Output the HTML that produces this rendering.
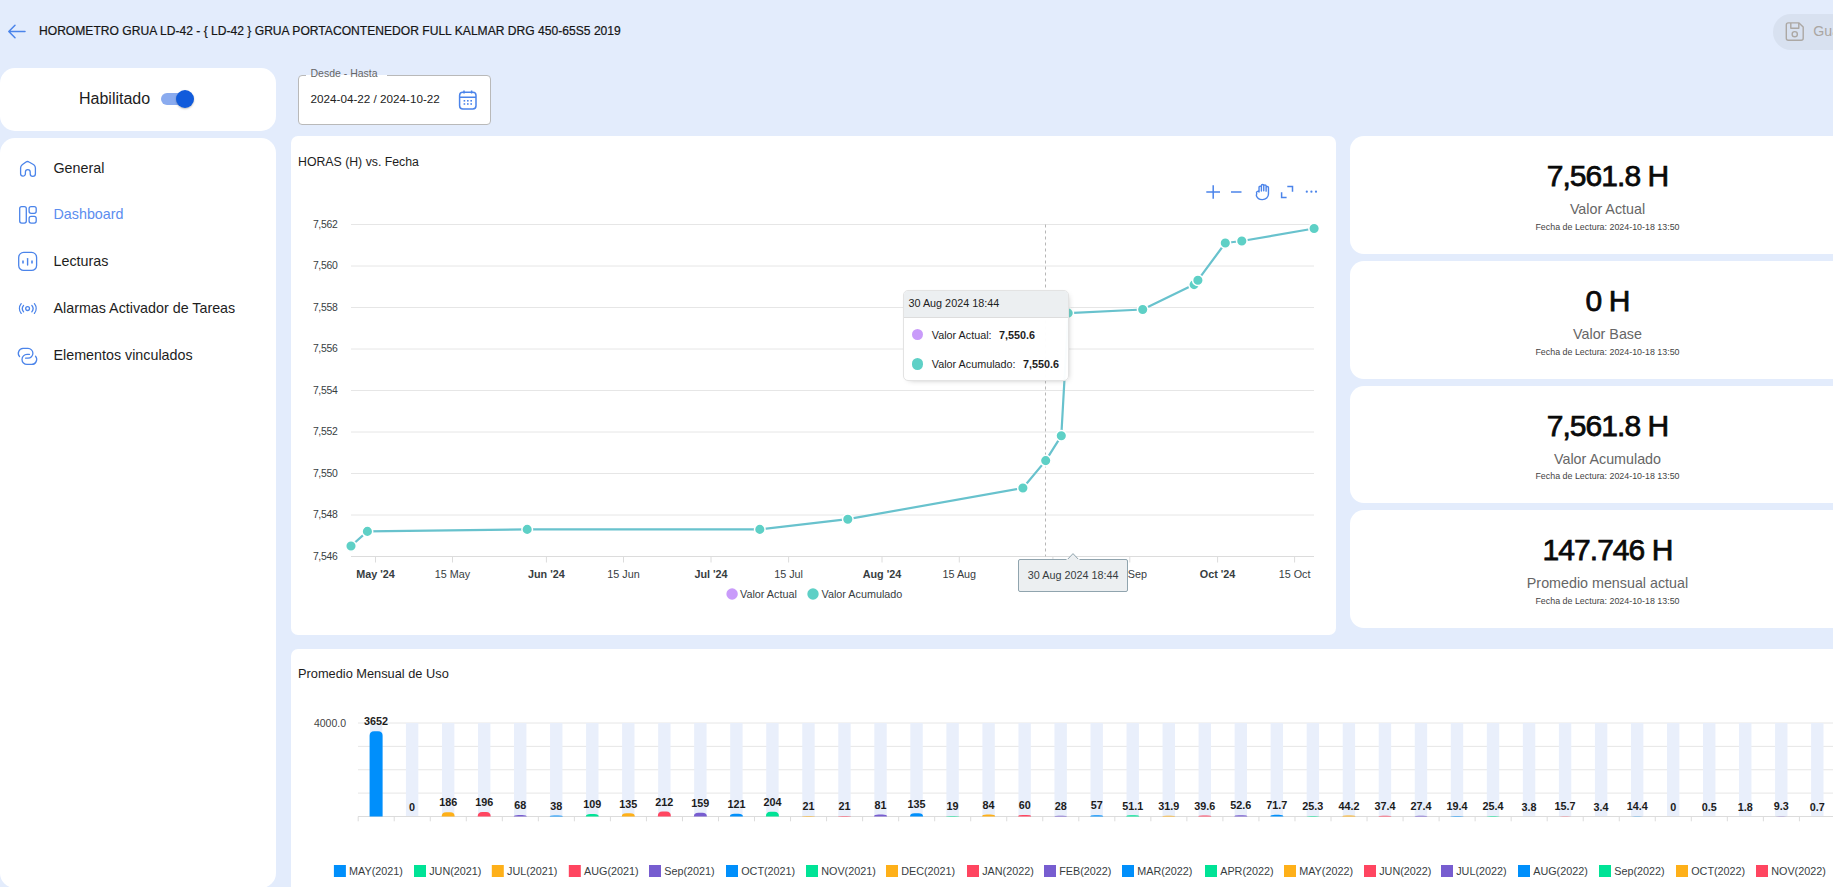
<!DOCTYPE html>
<html><head><meta charset="utf-8"><title>Horometro</title>
<style>
html,body{margin:0;padding:0;}
body{width:1833px;height:887px;overflow:hidden;background:#e3ecfc;font-family:"Liberation Sans", sans-serif;position:relative;color:#1d1d1d;}
.a{position:absolute;}
.card{position:absolute;background:#fff;}
.t{position:absolute;white-space:nowrap;line-height:1;}
svg text{font-family:"Liberation Sans", sans-serif;}
</style></head><body>
<!-- header -->
<svg class="a" style="left:0;top:0" width="1833" height="60">
<path d="M9,31.5 H25 M15,25.3 L8.8,31.5 L15,37.7" stroke="#4b84ea" stroke-width="1.5" fill="none" stroke-linecap="round" stroke-linejoin="round"/>
</svg>
<div class="t" style="left:39px;top:25px;font-size:12.1px;color:#151515;-webkit-text-stroke:0.2px #151515">HOROMETRO GRUA LD-42 - { LD-42 } GRUA PORTACONTENEDOR FULL KALMAR DRG 450-65S5 2019</div>
<div class="a" style="left:1773px;top:14px;width:130px;height:36px;border-radius:18px;background:#d8e1f0"></div>
<svg class="a" style="left:0;top:0" width="1833" height="60">
<g fill="none" stroke="#aca8a4" stroke-width="1.4" stroke-linejoin="round">
<path d="M1788.3,22.9 H1799 L1803.2,27.1 V38.3 A2,2 0 0 1 1801.2,40.3 H1788.3 A2,2 0 0 1 1786.3,38.3 V24.9 A2,2 0 0 1 1788.3,22.9 Z"/>
<path d="M1790.8,22.9 V28.2 H1798.8 V22.9"/>
<circle cx="1794.75" cy="34.2" r="2.6"/>
</g></svg>
<div class="t" style="left:1813.3px;top:23.8px;font-size:14.2px;color:#aaa6a2">Guardar</div>

<!-- sidebar -->
<div class="card" style="left:0;top:68px;width:276px;height:63px;border-radius:15px"></div>
<div class="t" style="left:79px;top:90.5px;font-size:16px;color:#1d1d1d">Habilitado</div>
<div class="a" style="left:161px;top:93px;width:30px;height:12px;border-radius:6px;background:#8aabef"></div>
<div class="a" style="left:176px;top:90px;width:18px;height:18px;border-radius:9px;background:#115bdb;box-shadow:0 1px 2px rgba(0,0,0,.25)"></div>

<div class="card" style="left:0;top:138px;width:276px;height:750px;border-radius:15px"></div>
<div class="t" style="left:53.5px;top:161.16px;font-size:14.3px;color:#1d1d1d">General</div>
<div class="t" style="left:53.5px;top:206.76px;font-size:14.3px;color:#5b8def">Dashboard</div>
<div class="t" style="left:53.5px;top:254.36px;font-size:14.3px;color:#1d1d1d">Lecturas</div>
<div class="t" style="left:53.5px;top:301.16px;font-size:14.3px;color:#1d1d1d">Alarmas Activador de Tareas</div>
<div class="t" style="left:53.5px;top:348.36px;font-size:14.3px;color:#1d1d1d">Elementos vinculados</div>
<svg class="a" style="left:0;top:140px" width="60" height="240" viewBox="0 140 60 240" fill="none" stroke="#4b84ea" stroke-width="1.3" stroke-linejoin="round" stroke-linecap="round">
<path d="M20.6,168 Q20.6,166 22.2,164.8 L26,162 Q27.5,161 29,162 L33.8,164.8 Q35.4,166 35.4,168 V173.7 a2.55,2.55 0 0 1 -5.2,0 V172 a2.4,2.4 0 0 0 -4.8,0 V173.7 a2.4,2.4 0 0 1 -4.8,0 Z"/>
<rect x="19.7" y="206.6" width="6.6" height="16.5" rx="2"/>
<rect x="29.1" y="206.6" width="7.1" height="6.7" rx="2"/>
<rect x="29.1" y="216.4" width="7.1" height="6.7" rx="2"/>
<rect x="18.7" y="252.4" width="17.9" height="18" rx="5"/>
<path d="M27.6,258.6 V265.1" stroke-width="1.4"/>
<path d="M23,260.4 V263.4 M32,260.4 V263.4" stroke-width="1.6" stroke-linecap="butt"/>
<circle cx="27.6" cy="308.6" r="1.9"/>
<path d="M23.6,305.4 A5,5 0 0 0 23.6,311.8 M31.8,305.4 A5,5 0 0 1 31.8,311.8 M21.2,303.7 A7.6,7.6 0 0 0 21.2,313.4 M34.4,303.7 A7.6,7.6 0 0 1 34.4,313.4"/>
<path d="M19.6,356.6 A4.9,4.9 0 0 1 23,348.4 H28 A4.9,4.9 0 0 1 28,358.2 H25.6"/>
<path d="M29.4,354.4 H27 A5,5 0 0 0 27,364.4 H31.5 A5,5 0 0 0 35.5,356.2"/>
</svg>

<!-- date field -->
<div class="a" style="left:298px;top:75px;width:191px;height:48px;border:1px solid #b9b9b9;border-radius:4px;background:#fff"></div>
<div class="a" style="left:306px;top:70px;width:81px;height:5.5px;background:#e3ecfc"></div>
<div class="a" style="left:306px;top:75px;width:81px;height:2px;background:#fff"></div>
<div class="t" style="left:310.5px;top:68px;font-size:10.5px;color:#666">Desde - Hasta</div>
<div class="t" style="left:310.5px;top:93px;font-size:11.7px;color:#222">2024-04-22 / 2024-10-22</div>
<svg class="a" style="left:457px;top:89px" width="22" height="22" viewBox="0 0 22 22">
<rect x="2.6" y="3.3" width="16.4" height="16.6" rx="3.2" fill="none" stroke="#4b84ea" stroke-width="1.5"/>
<path d="M2.6,8.2 H19 M7,1.5 V4.5 M14.6,1.5 V4.5" stroke="#4b84ea" stroke-width="1.5" fill="none"/>
<g fill="#4b84ea"><rect x="6.6" y="11" width="1.6" height="1.6"/><rect x="10" y="11" width="1.6" height="1.6"/><rect x="13.4" y="11" width="1.6" height="1.6"/>
<rect x="6.6" y="14.2" width="1.6" height="1.6"/><rect x="10" y="14.2" width="1.6" height="1.6"/><rect x="13.4" y="14.2" width="1.6" height="1.6"/></g>
</svg>

<!-- line chart card -->
<div class="card" style="left:291px;top:136px;width:1045px;height:499px;border-radius:7px"></div>
<div class="t" style="left:298px;top:155.9px;font-size:12.3px;color:#1d1d1d">HORAS (H) vs. Fecha</div>
<svg class="a" style="left:0;top:0" width="1833" height="887">
<line x1="351" y1="224.5" x2="1314" y2="224.5" stroke="#e6e6e6" stroke-width="1"/>
<text x="337.4" y="227.5" text-anchor="end" font-size="10.4" letter-spacing="-0.3" fill="#373d3f">7,562</text>
<line x1="351" y1="266.0" x2="1314" y2="266.0" stroke="#e6e6e6" stroke-width="1"/>
<text x="337.4" y="269.0" text-anchor="end" font-size="10.4" letter-spacing="-0.3" fill="#373d3f">7,560</text>
<line x1="351" y1="307.5" x2="1314" y2="307.5" stroke="#e6e6e6" stroke-width="1"/>
<text x="337.4" y="310.5" text-anchor="end" font-size="10.4" letter-spacing="-0.3" fill="#373d3f">7,558</text>
<line x1="351" y1="349.0" x2="1314" y2="349.0" stroke="#e6e6e6" stroke-width="1"/>
<text x="337.4" y="352.0" text-anchor="end" font-size="10.4" letter-spacing="-0.3" fill="#373d3f">7,556</text>
<line x1="351" y1="390.5" x2="1314" y2="390.5" stroke="#e6e6e6" stroke-width="1"/>
<text x="337.4" y="393.5" text-anchor="end" font-size="10.4" letter-spacing="-0.3" fill="#373d3f">7,554</text>
<line x1="351" y1="432.0" x2="1314" y2="432.0" stroke="#e6e6e6" stroke-width="1"/>
<text x="337.4" y="435.0" text-anchor="end" font-size="10.4" letter-spacing="-0.3" fill="#373d3f">7,552</text>
<line x1="351" y1="473.5" x2="1314" y2="473.5" stroke="#e6e6e6" stroke-width="1"/>
<text x="337.4" y="476.5" text-anchor="end" font-size="10.4" letter-spacing="-0.3" fill="#373d3f">7,550</text>
<line x1="351" y1="515.0" x2="1314" y2="515.0" stroke="#e6e6e6" stroke-width="1"/>
<text x="337.4" y="518.0" text-anchor="end" font-size="10.4" letter-spacing="-0.3" fill="#373d3f">7,548</text>
<line x1="351" y1="556.5" x2="1314" y2="556.5" stroke="#dcdcdc" stroke-width="1"/>
<text x="337.4" y="559.5" text-anchor="end" font-size="10.4" letter-spacing="-0.3" fill="#373d3f">7,546</text>
<line x1="375.5" y1="556.5" x2="375.5" y2="562.5" stroke="#dcdcdc" stroke-width="1"/>
<text x="375.5" y="578" text-anchor="middle" font-size="10.8" fill="#373d3f" font-weight="700">May '24</text>
<line x1="452.5" y1="556.5" x2="452.5" y2="562.5" stroke="#dcdcdc" stroke-width="1"/>
<text x="452.5" y="578" text-anchor="middle" font-size="10.8" fill="#373d3f" font-weight="400">15 May</text>
<line x1="546.4" y1="556.5" x2="546.4" y2="562.5" stroke="#dcdcdc" stroke-width="1"/>
<text x="546.4" y="578" text-anchor="middle" font-size="10.8" fill="#373d3f" font-weight="700">Jun '24</text>
<line x1="623.5" y1="556.5" x2="623.5" y2="562.5" stroke="#dcdcdc" stroke-width="1"/>
<text x="623.5" y="578" text-anchor="middle" font-size="10.8" fill="#373d3f" font-weight="400">15 Jun</text>
<line x1="711" y1="556.5" x2="711" y2="562.5" stroke="#dcdcdc" stroke-width="1"/>
<text x="711" y="578" text-anchor="middle" font-size="10.8" fill="#373d3f" font-weight="700">Jul '24</text>
<line x1="788.6" y1="556.5" x2="788.6" y2="562.5" stroke="#dcdcdc" stroke-width="1"/>
<text x="788.6" y="578" text-anchor="middle" font-size="10.8" fill="#373d3f" font-weight="400">15 Jul</text>
<line x1="882" y1="556.5" x2="882" y2="562.5" stroke="#dcdcdc" stroke-width="1"/>
<text x="882" y="578" text-anchor="middle" font-size="10.8" fill="#373d3f" font-weight="700">Aug '24</text>
<line x1="959.3" y1="556.5" x2="959.3" y2="562.5" stroke="#dcdcdc" stroke-width="1"/>
<text x="959.3" y="578" text-anchor="middle" font-size="10.8" fill="#373d3f" font-weight="400">15 Aug</text>
<line x1="1052.9" y1="556.5" x2="1052.9" y2="562.5" stroke="#dcdcdc" stroke-width="1"/>
<text x="1052.9" y="578" text-anchor="middle" font-size="10.8" fill="#373d3f" font-weight="700">Sep '24</text>
<line x1="1129.8" y1="556.5" x2="1129.8" y2="562.5" stroke="#dcdcdc" stroke-width="1"/>
<text x="1129.8" y="578" text-anchor="middle" font-size="10.8" fill="#373d3f" font-weight="400">15 Sep</text>
<line x1="1217.6" y1="556.5" x2="1217.6" y2="562.5" stroke="#dcdcdc" stroke-width="1"/>
<text x="1217.6" y="578" text-anchor="middle" font-size="10.8" fill="#373d3f" font-weight="700">Oct '24</text>
<line x1="1294.6" y1="556.5" x2="1294.6" y2="562.5" stroke="#dcdcdc" stroke-width="1"/>
<text x="1294.6" y="578" text-anchor="middle" font-size="10.8" fill="#373d3f" font-weight="400">15 Oct</text>
<line x1="1045.5" y1="224.5" x2="1045.5" y2="556.5" stroke="#b6b6b6" stroke-width="1" stroke-dasharray="3 3"/>
<path d="M351,546 L367.4,531.4 L527.2,529.4 L759.8,529.4 L847.8,519.2 L1022.9,488 L1045.7,460.6 L1061.3,435.8 L1068.2,313.1 L1142.7,309.5 L1194.1,284.6 L1197.9,280.2 L1225.3,243 L1241.8,241 L1314.1,228.5" fill="none" stroke="#68c2cd" stroke-width="2.2" stroke-linejoin="round"/>
<circle cx="351" cy="546" r="5.3" fill="#5ed0c6" stroke="#fff" stroke-width="1.5"/>
<circle cx="367.4" cy="531.4" r="5.3" fill="#5ed0c6" stroke="#fff" stroke-width="1.5"/>
<circle cx="527.2" cy="529.4" r="5.3" fill="#5ed0c6" stroke="#fff" stroke-width="1.5"/>
<circle cx="759.8" cy="529.4" r="5.3" fill="#5ed0c6" stroke="#fff" stroke-width="1.5"/>
<circle cx="847.8" cy="519.2" r="5.3" fill="#5ed0c6" stroke="#fff" stroke-width="1.5"/>
<circle cx="1022.9" cy="488" r="5.3" fill="#5ed0c6" stroke="#fff" stroke-width="1.5"/>
<circle cx="1045.7" cy="460.6" r="5.3" fill="#5ed0c6" stroke="#fff" stroke-width="1.5"/>
<circle cx="1061.3" cy="435.8" r="5.3" fill="#5ed0c6" stroke="#fff" stroke-width="1.5"/>
<circle cx="1068.2" cy="313.1" r="5.3" fill="#5ed0c6" stroke="#fff" stroke-width="1.5"/>
<circle cx="1142.7" cy="309.5" r="5.3" fill="#5ed0c6" stroke="#fff" stroke-width="1.5"/>
<circle cx="1194.1" cy="284.6" r="5.3" fill="#5ed0c6" stroke="#fff" stroke-width="1.5"/>
<circle cx="1197.9" cy="280.2" r="5.3" fill="#5ed0c6" stroke="#fff" stroke-width="1.5"/>
<circle cx="1225.3" cy="243" r="5.3" fill="#5ed0c6" stroke="#fff" stroke-width="1.5"/>
<circle cx="1241.8" cy="241" r="5.3" fill="#5ed0c6" stroke="#fff" stroke-width="1.5"/>
<circle cx="1314.1" cy="228.5" r="5.3" fill="#5ed0c6" stroke="#fff" stroke-width="1.5"/>
<g stroke="#4b84ea" stroke-width="1.5" fill="none" stroke-linecap="butt"><path d="M1206.3,192 H1220 M1213.2,185.2 V198.8"/><path d="M1231,192 H1241.5"/><path d="M1287.3,186.6 H1292.5 V191.8 M1281.6,192.2 V197.4 H1286.6" stroke-width="1.5"/></g>
<g transform="translate(1255.3,184) scale(1.07,1)" stroke="#4b84ea" stroke-width="1.3" fill="none" stroke-linecap="round" stroke-linejoin="round"><path d="M3.5,8 V3.2 a1.1,1.1 0 0 1 2.2,0 V7 M5.7,6.8 V1.6 a1.1,1.1 0 0 1 2.2,0 V6.8 M7.9,6.8 V2 a1.1,1.1 0 0 1 2.2,0 V7.2 M10.1,7.2 V3.6 a1.1,1.1 0 0 1 2.2,0 V10 a5.6,5.6 0 0 1 -5.6,5.6 h-0.4 a5.6,5.6 0 0 1 -5.3,-3.8 L1.3,9.2 a1.1,1.1 0 0 1 2.2,-1.2"/></g>
<g fill="#4b84ea"><circle cx="1306.8" cy="191.7" r="1.1"/><circle cx="1311.4" cy="191.7" r="1.1"/><circle cx="1316" cy="191.7" r="1.1"/></g>
<circle cx="732.1" cy="594" r="5.7" fill="#c99bfa"/>
<text x="740" y="597.8" font-size="10.8" fill="#373d3f">Valor Actual</text>
<circle cx="813" cy="594" r="5.7" fill="#5ed0c6"/>
<text x="821.5" y="597.8" font-size="10.8" fill="#373d3f">Valor Acumulado</text>
</svg>
<div class="a" style="left:903px;top:290px;width:164px;height:89px;border:1px solid #e3e3e3;border-radius:5px;background:rgba(255,255,255,0.97);box-shadow:2px 2px 6px -4px #999;overflow:hidden">
<div class="a" style="left:0;top:0;width:164px;height:25.5px;background:#eceff1;border-bottom:1px solid #ddd"></div>
</div>
<div class="t" style="left:908.5px;top:297.8px;font-size:10.8px;color:#1d1d1d">30 Aug 2024 18:44</div>
<div class="a" style="left:911.8px;top:328.8px;width:11.4px;height:11.4px;border-radius:6px;background:#c99bfa"></div>
<div class="t" style="left:931.8px;top:329.9px;font-size:10.8px;color:#1d1d1d">Valor Actual:</div>
<div class="t" style="left:999px;top:329.9px;font-size:10.8px;font-weight:700;color:#1d1d1d">7,550.6</div>
<div class="a" style="left:911.8px;top:358.3px;width:11.4px;height:11.4px;border-radius:6px;background:#5ed0c6"></div>
<div class="t" style="left:931.8px;top:359.1px;font-size:10.8px;color:#1d1d1d">Valor Acumulado:</div>
<div class="t" style="left:1023px;top:359.1px;font-size:10.8px;font-weight:700;color:#1d1d1d">7,550.6</div>
<!-- x tooltip -->
<div class="a" style="left:1018px;top:558.5px;width:108px;height:31.5px;border:1px solid #90a4ae;border-radius:2px;background:#eceff1"></div>
<svg class="a" style="left:1063px;top:551px" width="20" height="10" viewBox="0 0 20 10"><path d="M4.6,8.3 L10,2.6 L15.4,8.3" fill="#eceff1" stroke="#90a4ae" stroke-width="1"/><rect x="3.5" y="8" width="13" height="3" fill="#eceff1"/></svg>
<div class="t" style="left:1027.8px;top:570px;font-size:10.8px;color:#373d3f">30 Aug 2024 18:44</div>


<!-- stat cards -->
<div class="card" style="left:1350px;top:136px;width:520px;height:117.6px;border-radius:14px"></div>
<div class="t" style="left:1307.5px;width:600px;text-align:center;top:161.20px;font-size:30px;letter-spacing:-0.95px;font-weight:400;-webkit-text-stroke:0.75px #0a0a0a;color:#0a0a0a">7,561.8 H</div>
<div class="t" style="left:1307.5px;width:600px;text-align:center;top:202.06px;font-size:14.3px;color:#666">Valor Actual</div>
<div class="t" style="left:1307.5px;width:600px;text-align:center;top:222.95px;font-size:8.9px;color:#444">Fecha de Lectura: 2024-10-18 13:50</div>
<div class="card" style="left:1350px;top:261px;width:520px;height:117.6px;border-radius:14px"></div>
<div class="t" style="left:1307.5px;width:600px;text-align:center;top:286.21px;font-size:30px;letter-spacing:-0.95px;font-weight:400;-webkit-text-stroke:0.75px #0a0a0a;color:#0a0a0a">0 H</div>
<div class="t" style="left:1307.5px;width:600px;text-align:center;top:327.06px;font-size:14.3px;color:#666">Valor Base</div>
<div class="t" style="left:1307.5px;width:600px;text-align:center;top:347.95px;font-size:8.9px;color:#444">Fecha de Lectura: 2024-10-18 13:50</div>
<div class="card" style="left:1350px;top:385.5px;width:520px;height:117.6px;border-radius:14px"></div>
<div class="t" style="left:1307.5px;width:600px;text-align:center;top:410.71px;font-size:30px;letter-spacing:-0.95px;font-weight:400;-webkit-text-stroke:0.75px #0a0a0a;color:#0a0a0a">7,561.8 H</div>
<div class="t" style="left:1307.5px;width:600px;text-align:center;top:451.56px;font-size:14.3px;color:#666">Valor Acumulado</div>
<div class="t" style="left:1307.5px;width:600px;text-align:center;top:472.45px;font-size:8.9px;color:#444">Fecha de Lectura: 2024-10-18 13:50</div>
<div class="card" style="left:1350px;top:510.2px;width:520px;height:117.6px;border-radius:14px"></div>
<div class="t" style="left:1307.5px;width:600px;text-align:center;top:535.40px;font-size:30px;letter-spacing:-0.95px;font-weight:400;-webkit-text-stroke:0.75px #0a0a0a;color:#0a0a0a">147.746 H</div>
<div class="t" style="left:1307.5px;width:600px;text-align:center;top:576.26px;font-size:14.3px;color:#666">Promedio mensual actual</div>
<div class="t" style="left:1307.5px;width:600px;text-align:center;top:597.15px;font-size:8.9px;color:#444">Fecha de Lectura: 2024-10-18 13:50</div>

<!-- bar chart card -->
<div class="card" style="left:291px;top:649px;width:1600px;height:300px;border-radius:7px"></div>
<div class="t" style="left:298px;top:667.6px;font-size:12.8px;color:#1d1d1d">Promedio Mensual de Uso</div>
<svg class="a" style="left:0;top:0" width="1833" height="887">
<line x1="358" y1="723.00" x2="1833" y2="723.00" stroke="#e6e6e6" stroke-width="1"/>
<line x1="358" y1="746.38" x2="1833" y2="746.38" stroke="#e6e6e6" stroke-width="1"/>
<line x1="358" y1="769.75" x2="1833" y2="769.75" stroke="#e6e6e6" stroke-width="1"/>
<line x1="358" y1="793.12" x2="1833" y2="793.12" stroke="#e6e6e6" stroke-width="1"/>
<text x="346" y="727" text-anchor="end" font-size="10.5" fill="#444">4000.0</text>
<rect x="369.90" y="723" width="12.4" height="93.5" fill="#e9effb"/>
<rect x="405.93" y="723" width="12.4" height="93.5" fill="#e9effb"/>
<rect x="441.96" y="723" width="12.4" height="93.5" fill="#e9effb"/>
<rect x="477.99" y="723" width="12.4" height="93.5" fill="#e9effb"/>
<rect x="514.02" y="723" width="12.4" height="93.5" fill="#e9effb"/>
<rect x="550.05" y="723" width="12.4" height="93.5" fill="#e9effb"/>
<rect x="586.08" y="723" width="12.4" height="93.5" fill="#e9effb"/>
<rect x="622.11" y="723" width="12.4" height="93.5" fill="#e9effb"/>
<rect x="658.14" y="723" width="12.4" height="93.5" fill="#e9effb"/>
<rect x="694.17" y="723" width="12.4" height="93.5" fill="#e9effb"/>
<rect x="730.20" y="723" width="12.4" height="93.5" fill="#e9effb"/>
<rect x="766.23" y="723" width="12.4" height="93.5" fill="#e9effb"/>
<rect x="802.26" y="723" width="12.4" height="93.5" fill="#e9effb"/>
<rect x="838.29" y="723" width="12.4" height="93.5" fill="#e9effb"/>
<rect x="874.32" y="723" width="12.4" height="93.5" fill="#e9effb"/>
<rect x="910.35" y="723" width="12.4" height="93.5" fill="#e9effb"/>
<rect x="946.38" y="723" width="12.4" height="93.5" fill="#e9effb"/>
<rect x="982.41" y="723" width="12.4" height="93.5" fill="#e9effb"/>
<rect x="1018.44" y="723" width="12.4" height="93.5" fill="#e9effb"/>
<rect x="1054.47" y="723" width="12.4" height="93.5" fill="#e9effb"/>
<rect x="1090.50" y="723" width="12.4" height="93.5" fill="#e9effb"/>
<rect x="1126.53" y="723" width="12.4" height="93.5" fill="#e9effb"/>
<rect x="1162.56" y="723" width="12.4" height="93.5" fill="#e9effb"/>
<rect x="1198.59" y="723" width="12.4" height="93.5" fill="#e9effb"/>
<rect x="1234.62" y="723" width="12.4" height="93.5" fill="#e9effb"/>
<rect x="1270.65" y="723" width="12.4" height="93.5" fill="#e9effb"/>
<rect x="1306.68" y="723" width="12.4" height="93.5" fill="#e9effb"/>
<rect x="1342.71" y="723" width="12.4" height="93.5" fill="#e9effb"/>
<rect x="1378.74" y="723" width="12.4" height="93.5" fill="#e9effb"/>
<rect x="1414.77" y="723" width="12.4" height="93.5" fill="#e9effb"/>
<rect x="1450.80" y="723" width="12.4" height="93.5" fill="#e9effb"/>
<rect x="1486.83" y="723" width="12.4" height="93.5" fill="#e9effb"/>
<rect x="1522.86" y="723" width="12.4" height="93.5" fill="#e9effb"/>
<rect x="1558.89" y="723" width="12.4" height="93.5" fill="#e9effb"/>
<rect x="1594.92" y="723" width="12.4" height="93.5" fill="#e9effb"/>
<rect x="1630.95" y="723" width="12.4" height="93.5" fill="#e9effb"/>
<rect x="1666.98" y="723" width="12.4" height="93.5" fill="#e9effb"/>
<rect x="1703.01" y="723" width="12.4" height="93.5" fill="#e9effb"/>
<rect x="1739.04" y="723" width="12.4" height="93.5" fill="#e9effb"/>
<rect x="1775.07" y="723" width="12.4" height="93.5" fill="#e9effb"/>
<rect x="1811.10" y="723" width="12.4" height="93.5" fill="#e9effb"/>
<line x1="358" y1="816.5" x2="1833" y2="816.5" stroke="#dcdcdc" stroke-width="1"/>
<line x1="358.20" y1="816.5" x2="358.20" y2="821.3" stroke="#dcdcdc" stroke-width="1"/>
<line x1="394.23" y1="816.5" x2="394.23" y2="821.3" stroke="#dcdcdc" stroke-width="1"/>
<line x1="430.26" y1="816.5" x2="430.26" y2="821.3" stroke="#dcdcdc" stroke-width="1"/>
<line x1="466.29" y1="816.5" x2="466.29" y2="821.3" stroke="#dcdcdc" stroke-width="1"/>
<line x1="502.32" y1="816.5" x2="502.32" y2="821.3" stroke="#dcdcdc" stroke-width="1"/>
<line x1="538.35" y1="816.5" x2="538.35" y2="821.3" stroke="#dcdcdc" stroke-width="1"/>
<line x1="574.38" y1="816.5" x2="574.38" y2="821.3" stroke="#dcdcdc" stroke-width="1"/>
<line x1="610.41" y1="816.5" x2="610.41" y2="821.3" stroke="#dcdcdc" stroke-width="1"/>
<line x1="646.44" y1="816.5" x2="646.44" y2="821.3" stroke="#dcdcdc" stroke-width="1"/>
<line x1="682.47" y1="816.5" x2="682.47" y2="821.3" stroke="#dcdcdc" stroke-width="1"/>
<line x1="718.50" y1="816.5" x2="718.50" y2="821.3" stroke="#dcdcdc" stroke-width="1"/>
<line x1="754.53" y1="816.5" x2="754.53" y2="821.3" stroke="#dcdcdc" stroke-width="1"/>
<line x1="790.56" y1="816.5" x2="790.56" y2="821.3" stroke="#dcdcdc" stroke-width="1"/>
<line x1="826.59" y1="816.5" x2="826.59" y2="821.3" stroke="#dcdcdc" stroke-width="1"/>
<line x1="862.62" y1="816.5" x2="862.62" y2="821.3" stroke="#dcdcdc" stroke-width="1"/>
<line x1="898.65" y1="816.5" x2="898.65" y2="821.3" stroke="#dcdcdc" stroke-width="1"/>
<line x1="934.68" y1="816.5" x2="934.68" y2="821.3" stroke="#dcdcdc" stroke-width="1"/>
<line x1="970.71" y1="816.5" x2="970.71" y2="821.3" stroke="#dcdcdc" stroke-width="1"/>
<line x1="1006.74" y1="816.5" x2="1006.74" y2="821.3" stroke="#dcdcdc" stroke-width="1"/>
<line x1="1042.77" y1="816.5" x2="1042.77" y2="821.3" stroke="#dcdcdc" stroke-width="1"/>
<line x1="1078.80" y1="816.5" x2="1078.80" y2="821.3" stroke="#dcdcdc" stroke-width="1"/>
<line x1="1114.83" y1="816.5" x2="1114.83" y2="821.3" stroke="#dcdcdc" stroke-width="1"/>
<line x1="1150.86" y1="816.5" x2="1150.86" y2="821.3" stroke="#dcdcdc" stroke-width="1"/>
<line x1="1186.89" y1="816.5" x2="1186.89" y2="821.3" stroke="#dcdcdc" stroke-width="1"/>
<line x1="1222.92" y1="816.5" x2="1222.92" y2="821.3" stroke="#dcdcdc" stroke-width="1"/>
<line x1="1258.95" y1="816.5" x2="1258.95" y2="821.3" stroke="#dcdcdc" stroke-width="1"/>
<line x1="1294.98" y1="816.5" x2="1294.98" y2="821.3" stroke="#dcdcdc" stroke-width="1"/>
<line x1="1331.01" y1="816.5" x2="1331.01" y2="821.3" stroke="#dcdcdc" stroke-width="1"/>
<line x1="1367.04" y1="816.5" x2="1367.04" y2="821.3" stroke="#dcdcdc" stroke-width="1"/>
<line x1="1403.07" y1="816.5" x2="1403.07" y2="821.3" stroke="#dcdcdc" stroke-width="1"/>
<line x1="1439.10" y1="816.5" x2="1439.10" y2="821.3" stroke="#dcdcdc" stroke-width="1"/>
<line x1="1475.13" y1="816.5" x2="1475.13" y2="821.3" stroke="#dcdcdc" stroke-width="1"/>
<line x1="1511.16" y1="816.5" x2="1511.16" y2="821.3" stroke="#dcdcdc" stroke-width="1"/>
<line x1="1547.19" y1="816.5" x2="1547.19" y2="821.3" stroke="#dcdcdc" stroke-width="1"/>
<line x1="1583.22" y1="816.5" x2="1583.22" y2="821.3" stroke="#dcdcdc" stroke-width="1"/>
<line x1="1619.25" y1="816.5" x2="1619.25" y2="821.3" stroke="#dcdcdc" stroke-width="1"/>
<line x1="1655.28" y1="816.5" x2="1655.28" y2="821.3" stroke="#dcdcdc" stroke-width="1"/>
<line x1="1691.31" y1="816.5" x2="1691.31" y2="821.3" stroke="#dcdcdc" stroke-width="1"/>
<line x1="1727.34" y1="816.5" x2="1727.34" y2="821.3" stroke="#dcdcdc" stroke-width="1"/>
<line x1="1763.37" y1="816.5" x2="1763.37" y2="821.3" stroke="#dcdcdc" stroke-width="1"/>
<line x1="1799.40" y1="816.5" x2="1799.40" y2="821.3" stroke="#dcdcdc" stroke-width="1"/>
<line x1="1835.43" y1="816.5" x2="1835.43" y2="821.3" stroke="#dcdcdc" stroke-width="1"/>
<path d="M369.60,816.5 V735.63 Q369.60,731.13 374.10,731.13 H378.10 Q382.60,731.13 382.60,735.63 V816.5 Z" fill="#008ffb"/>
<text x="376.10" y="725.33" text-anchor="middle" font-size="10.8" font-weight="700" fill="#1c1c1c">3652</text>
<text x="412.13" y="810.70" text-anchor="middle" font-size="10.8" font-weight="700" fill="#1c1c1c">0</text>
<path d="M441.66,816.5 Q441.66,812.15 446.16,812.15 H450.16 Q454.66,812.15 454.66,816.5 Z" fill="#feb019"/>
<text x="448.16" y="806.35" text-anchor="middle" font-size="10.8" font-weight="700" fill="#1c1c1c">186</text>
<path d="M477.69,816.5 V816.42 Q477.69,811.92 482.19,811.92 H486.19 Q490.69,811.92 490.69,816.42 V816.5 Z" fill="#ff4560"/>
<text x="484.19" y="806.12" text-anchor="middle" font-size="10.8" font-weight="700" fill="#1c1c1c">196</text>
<path d="M513.72,816.5 Q513.72,814.91 518.22,814.91 H522.22 Q526.72,814.91 526.72,816.5 Z" fill="#775dd0"/>
<text x="520.22" y="809.11" text-anchor="middle" font-size="10.8" font-weight="700" fill="#1c1c1c">68</text>
<path d="M549.75,816.5 Q549.75,815.61 554.25,815.61 H558.25 Q562.75,815.61 562.75,816.5 Z" fill="#008ffb"/>
<text x="556.25" y="809.81" text-anchor="middle" font-size="10.8" font-weight="700" fill="#1c1c1c">38</text>
<path d="M585.78,816.5 Q585.78,813.95 590.28,813.95 H594.28 Q598.78,813.95 598.78,816.5 Z" fill="#00e396"/>
<text x="592.28" y="808.15" text-anchor="middle" font-size="10.8" font-weight="700" fill="#1c1c1c">109</text>
<path d="M621.81,816.5 Q621.81,813.34 626.31,813.34 H630.31 Q634.81,813.34 634.81,816.5 Z" fill="#feb019"/>
<text x="628.31" y="807.54" text-anchor="middle" font-size="10.8" font-weight="700" fill="#1c1c1c">135</text>
<path d="M657.84,816.5 V816.04 Q657.84,811.54 662.34,811.54 H666.34 Q670.84,811.54 670.84,816.04 V816.5 Z" fill="#ff4560"/>
<text x="664.34" y="805.74" text-anchor="middle" font-size="10.8" font-weight="700" fill="#1c1c1c">212</text>
<path d="M693.87,816.5 Q693.87,812.78 698.37,812.78 H702.37 Q706.87,812.78 706.87,816.5 Z" fill="#775dd0"/>
<text x="700.37" y="806.98" text-anchor="middle" font-size="10.8" font-weight="700" fill="#1c1c1c">159</text>
<path d="M729.90,816.5 Q729.90,813.67 734.40,813.67 H738.40 Q742.90,813.67 742.90,816.5 Z" fill="#008ffb"/>
<text x="736.40" y="807.87" text-anchor="middle" font-size="10.8" font-weight="700" fill="#1c1c1c">121</text>
<path d="M765.93,816.5 V816.23 Q765.93,811.73 770.43,811.73 H774.43 Q778.93,811.73 778.93,816.23 V816.5 Z" fill="#00e396"/>
<text x="772.43" y="805.93" text-anchor="middle" font-size="10.8" font-weight="700" fill="#1c1c1c">204</text>
<path d="M801.96,816.5 Q801.96,816.01 806.46,816.01 H810.46 Q814.96,816.01 814.96,816.5 Z" fill="#feb019"/>
<text x="808.46" y="810.21" text-anchor="middle" font-size="10.8" font-weight="700" fill="#1c1c1c">21</text>
<path d="M837.99,816.5 Q837.99,816.01 842.49,816.01 H846.49 Q850.99,816.01 850.99,816.5 Z" fill="#ff4560"/>
<text x="844.49" y="810.21" text-anchor="middle" font-size="10.8" font-weight="700" fill="#1c1c1c">21</text>
<path d="M874.02,816.5 Q874.02,814.61 878.52,814.61 H882.52 Q887.02,814.61 887.02,816.5 Z" fill="#775dd0"/>
<text x="880.52" y="808.81" text-anchor="middle" font-size="10.8" font-weight="700" fill="#1c1c1c">81</text>
<path d="M910.05,816.5 Q910.05,813.34 914.55,813.34 H918.55 Q923.05,813.34 923.05,816.5 Z" fill="#008ffb"/>
<text x="916.55" y="807.54" text-anchor="middle" font-size="10.8" font-weight="700" fill="#1c1c1c">135</text>
<path d="M946.08,816.5 Q946.08,816.06 950.58,816.06 H954.58 Q959.08,816.06 959.08,816.5 Z" fill="#00e396"/>
<text x="952.58" y="810.26" text-anchor="middle" font-size="10.8" font-weight="700" fill="#1c1c1c">19</text>
<path d="M982.11,816.5 Q982.11,814.54 986.61,814.54 H990.61 Q995.11,814.54 995.11,816.5 Z" fill="#feb019"/>
<text x="988.61" y="808.74" text-anchor="middle" font-size="10.8" font-weight="700" fill="#1c1c1c">84</text>
<path d="M1018.14,816.5 Q1018.14,815.10 1022.64,815.10 H1026.64 Q1031.14,815.10 1031.14,816.5 Z" fill="#ff4560"/>
<text x="1024.64" y="809.30" text-anchor="middle" font-size="10.8" font-weight="700" fill="#1c1c1c">60</text>
<path d="M1054.17,816.5 Q1054.17,815.85 1058.67,815.85 H1062.67 Q1067.17,815.85 1067.17,816.5 Z" fill="#775dd0"/>
<text x="1060.67" y="810.05" text-anchor="middle" font-size="10.8" font-weight="700" fill="#1c1c1c">28</text>
<path d="M1090.20,816.5 Q1090.20,815.17 1094.70,815.17 H1098.70 Q1103.20,815.17 1103.20,816.5 Z" fill="#008ffb"/>
<text x="1096.70" y="809.37" text-anchor="middle" font-size="10.8" font-weight="700" fill="#1c1c1c">57</text>
<path d="M1126.23,816.5 Q1126.23,815.31 1130.73,815.31 H1134.73 Q1139.23,815.31 1139.23,816.5 Z" fill="#00e396"/>
<text x="1132.73" y="809.51" text-anchor="middle" font-size="10.8" font-weight="700" fill="#1c1c1c">51.1</text>
<path d="M1162.26,816.5 Q1162.26,815.75 1166.76,815.75 H1170.76 Q1175.26,815.75 1175.26,816.5 Z" fill="#feb019"/>
<text x="1168.76" y="809.95" text-anchor="middle" font-size="10.8" font-weight="700" fill="#1c1c1c">31.9</text>
<path d="M1198.29,816.5 Q1198.29,815.57 1202.79,815.57 H1206.79 Q1211.29,815.57 1211.29,816.5 Z" fill="#ff4560"/>
<text x="1204.79" y="809.77" text-anchor="middle" font-size="10.8" font-weight="700" fill="#1c1c1c">39.6</text>
<path d="M1234.32,816.5 Q1234.32,815.27 1238.82,815.27 H1242.82 Q1247.32,815.27 1247.32,816.5 Z" fill="#775dd0"/>
<text x="1240.82" y="809.47" text-anchor="middle" font-size="10.8" font-weight="700" fill="#1c1c1c">52.6</text>
<path d="M1270.35,816.5 Q1270.35,814.82 1274.85,814.82 H1278.85 Q1283.35,814.82 1283.35,816.5 Z" fill="#008ffb"/>
<text x="1276.85" y="809.02" text-anchor="middle" font-size="10.8" font-weight="700" fill="#1c1c1c">71.7</text>
<path d="M1306.38,816.5 Q1306.38,815.91 1310.88,815.91 H1314.88 Q1319.38,815.91 1319.38,816.5 Z" fill="#00e396"/>
<text x="1312.88" y="810.11" text-anchor="middle" font-size="10.8" font-weight="700" fill="#1c1c1c">25.3</text>
<path d="M1342.41,816.5 Q1342.41,815.47 1346.91,815.47 H1350.91 Q1355.41,815.47 1355.41,816.5 Z" fill="#feb019"/>
<text x="1348.91" y="809.67" text-anchor="middle" font-size="10.8" font-weight="700" fill="#1c1c1c">44.2</text>
<path d="M1378.44,816.5 Q1378.44,815.63 1382.94,815.63 H1386.94 Q1391.44,815.63 1391.44,816.5 Z" fill="#ff4560"/>
<text x="1384.94" y="809.83" text-anchor="middle" font-size="10.8" font-weight="700" fill="#1c1c1c">37.4</text>
<path d="M1414.47,816.5 Q1414.47,815.86 1418.97,815.86 H1422.97 Q1427.47,815.86 1427.47,816.5 Z" fill="#775dd0"/>
<text x="1420.97" y="810.06" text-anchor="middle" font-size="10.8" font-weight="700" fill="#1c1c1c">27.4</text>
<path d="M1450.50,816.5 Q1450.50,816.05 1455.00,816.05 H1459.00 Q1463.50,816.05 1463.50,816.5 Z" fill="#008ffb"/>
<text x="1457.00" y="810.25" text-anchor="middle" font-size="10.8" font-weight="700" fill="#1c1c1c">19.4</text>
<path d="M1486.53,816.5 Q1486.53,815.91 1491.03,815.91 H1495.03 Q1499.53,815.91 1499.53,816.5 Z" fill="#00e396"/>
<text x="1493.03" y="810.11" text-anchor="middle" font-size="10.8" font-weight="700" fill="#1c1c1c">25.4</text>
<path d="M1522.56,816.5 Q1522.56,816.41 1527.06,816.41 H1531.06 Q1535.56,816.41 1535.56,816.5 Z" fill="#feb019"/>
<text x="1529.06" y="810.61" text-anchor="middle" font-size="10.8" font-weight="700" fill="#1c1c1c">3.8</text>
<path d="M1558.59,816.5 Q1558.59,816.13 1563.09,816.13 H1567.09 Q1571.59,816.13 1571.59,816.5 Z" fill="#ff4560"/>
<text x="1565.09" y="810.33" text-anchor="middle" font-size="10.8" font-weight="700" fill="#1c1c1c">15.7</text>
<path d="M1594.62,816.5 Q1594.62,816.42 1599.12,816.42 H1603.12 Q1607.62,816.42 1607.62,816.5 Z" fill="#775dd0"/>
<text x="1601.12" y="810.62" text-anchor="middle" font-size="10.8" font-weight="700" fill="#1c1c1c">3.4</text>
<path d="M1630.65,816.5 Q1630.65,816.16 1635.15,816.16 H1639.15 Q1643.65,816.16 1643.65,816.5 Z" fill="#008ffb"/>
<text x="1637.15" y="810.36" text-anchor="middle" font-size="10.8" font-weight="700" fill="#1c1c1c">14.4</text>
<text x="1673.18" y="810.70" text-anchor="middle" font-size="10.8" font-weight="700" fill="#1c1c1c">0</text>
<path d="M1702.71,816.5 Q1702.71,816.49 1707.21,816.49 H1711.21 Q1715.71,816.49 1715.71,816.5 Z" fill="#feb019"/>
<text x="1709.21" y="810.69" text-anchor="middle" font-size="10.8" font-weight="700" fill="#1c1c1c">0.5</text>
<path d="M1738.74,816.5 Q1738.74,816.46 1743.24,816.46 H1747.24 Q1751.74,816.46 1751.74,816.5 Z" fill="#ff4560"/>
<text x="1745.24" y="810.66" text-anchor="middle" font-size="10.8" font-weight="700" fill="#1c1c1c">1.8</text>
<path d="M1774.77,816.5 Q1774.77,816.28 1779.27,816.28 H1783.27 Q1787.77,816.28 1787.77,816.5 Z" fill="#775dd0"/>
<text x="1781.27" y="810.48" text-anchor="middle" font-size="10.8" font-weight="700" fill="#1c1c1c">9.3</text>
<path d="M1810.80,816.5 Q1810.80,816.48 1815.30,816.48 H1819.30 Q1823.80,816.48 1823.80,816.5 Z" fill="#008ffb"/>
<text x="1817.30" y="810.68" text-anchor="middle" font-size="10.8" font-weight="700" fill="#1c1c1c">0.7</text>
<rect x="333.9" y="865" width="12" height="12" fill="#008ffb"/>
<text x="349.09999999999997" y="874.9" font-size="10.8" fill="#373d3f">MAY(2021)</text>
<rect x="414" y="865" width="12" height="12" fill="#00e396"/>
<text x="429.2" y="874.9" font-size="10.8" fill="#373d3f">JUN(2021)</text>
<rect x="491.8" y="865" width="12" height="12" fill="#feb019"/>
<text x="507.0" y="874.9" font-size="10.8" fill="#373d3f">JUL(2021)</text>
<rect x="568.8" y="865" width="12" height="12" fill="#ff4560"/>
<text x="584.0" y="874.9" font-size="10.8" fill="#373d3f">AUG(2021)</text>
<rect x="649" y="865" width="12" height="12" fill="#775dd0"/>
<text x="664.2" y="874.9" font-size="10.8" fill="#373d3f">Sep(2021)</text>
<rect x="726" y="865" width="12" height="12" fill="#008ffb"/>
<text x="741.2" y="874.9" font-size="10.8" fill="#373d3f">OCT(2021)</text>
<rect x="806" y="865" width="12" height="12" fill="#00e396"/>
<text x="821.2" y="874.9" font-size="10.8" fill="#373d3f">NOV(2021)</text>
<rect x="886" y="865" width="12" height="12" fill="#feb019"/>
<text x="901.2" y="874.9" font-size="10.8" fill="#373d3f">DEC(2021)</text>
<rect x="967" y="865" width="12" height="12" fill="#ff4560"/>
<text x="982.2" y="874.9" font-size="10.8" fill="#373d3f">JAN(2022)</text>
<rect x="1044" y="865" width="12" height="12" fill="#775dd0"/>
<text x="1059.2" y="874.9" font-size="10.8" fill="#373d3f">FEB(2022)</text>
<rect x="1122" y="865" width="12" height="12" fill="#008ffb"/>
<text x="1137.2" y="874.9" font-size="10.8" fill="#373d3f">MAR(2022)</text>
<rect x="1205" y="865" width="12" height="12" fill="#00e396"/>
<text x="1220.2" y="874.9" font-size="10.8" fill="#373d3f">APR(2022)</text>
<rect x="1284" y="865" width="12" height="12" fill="#feb019"/>
<text x="1299.2" y="874.9" font-size="10.8" fill="#373d3f">MAY(2022)</text>
<rect x="1364" y="865" width="12" height="12" fill="#ff4560"/>
<text x="1379.2" y="874.9" font-size="10.8" fill="#373d3f">JUN(2022)</text>
<rect x="1441" y="865" width="12" height="12" fill="#775dd0"/>
<text x="1456.2" y="874.9" font-size="10.8" fill="#373d3f">JUL(2022)</text>
<rect x="1518" y="865" width="12" height="12" fill="#008ffb"/>
<text x="1533.2" y="874.9" font-size="10.8" fill="#373d3f">AUG(2022)</text>
<rect x="1599" y="865" width="12" height="12" fill="#00e396"/>
<text x="1614.2" y="874.9" font-size="10.8" fill="#373d3f">Sep(2022)</text>
<rect x="1676" y="865" width="12" height="12" fill="#feb019"/>
<text x="1691.2" y="874.9" font-size="10.8" fill="#373d3f">OCT(2022)</text>
<rect x="1756" y="865" width="12" height="12" fill="#ff4560"/>
<text x="1771.2" y="874.9" font-size="10.8" fill="#373d3f">NOV(2022)</text>
</svg>
</body></html>
